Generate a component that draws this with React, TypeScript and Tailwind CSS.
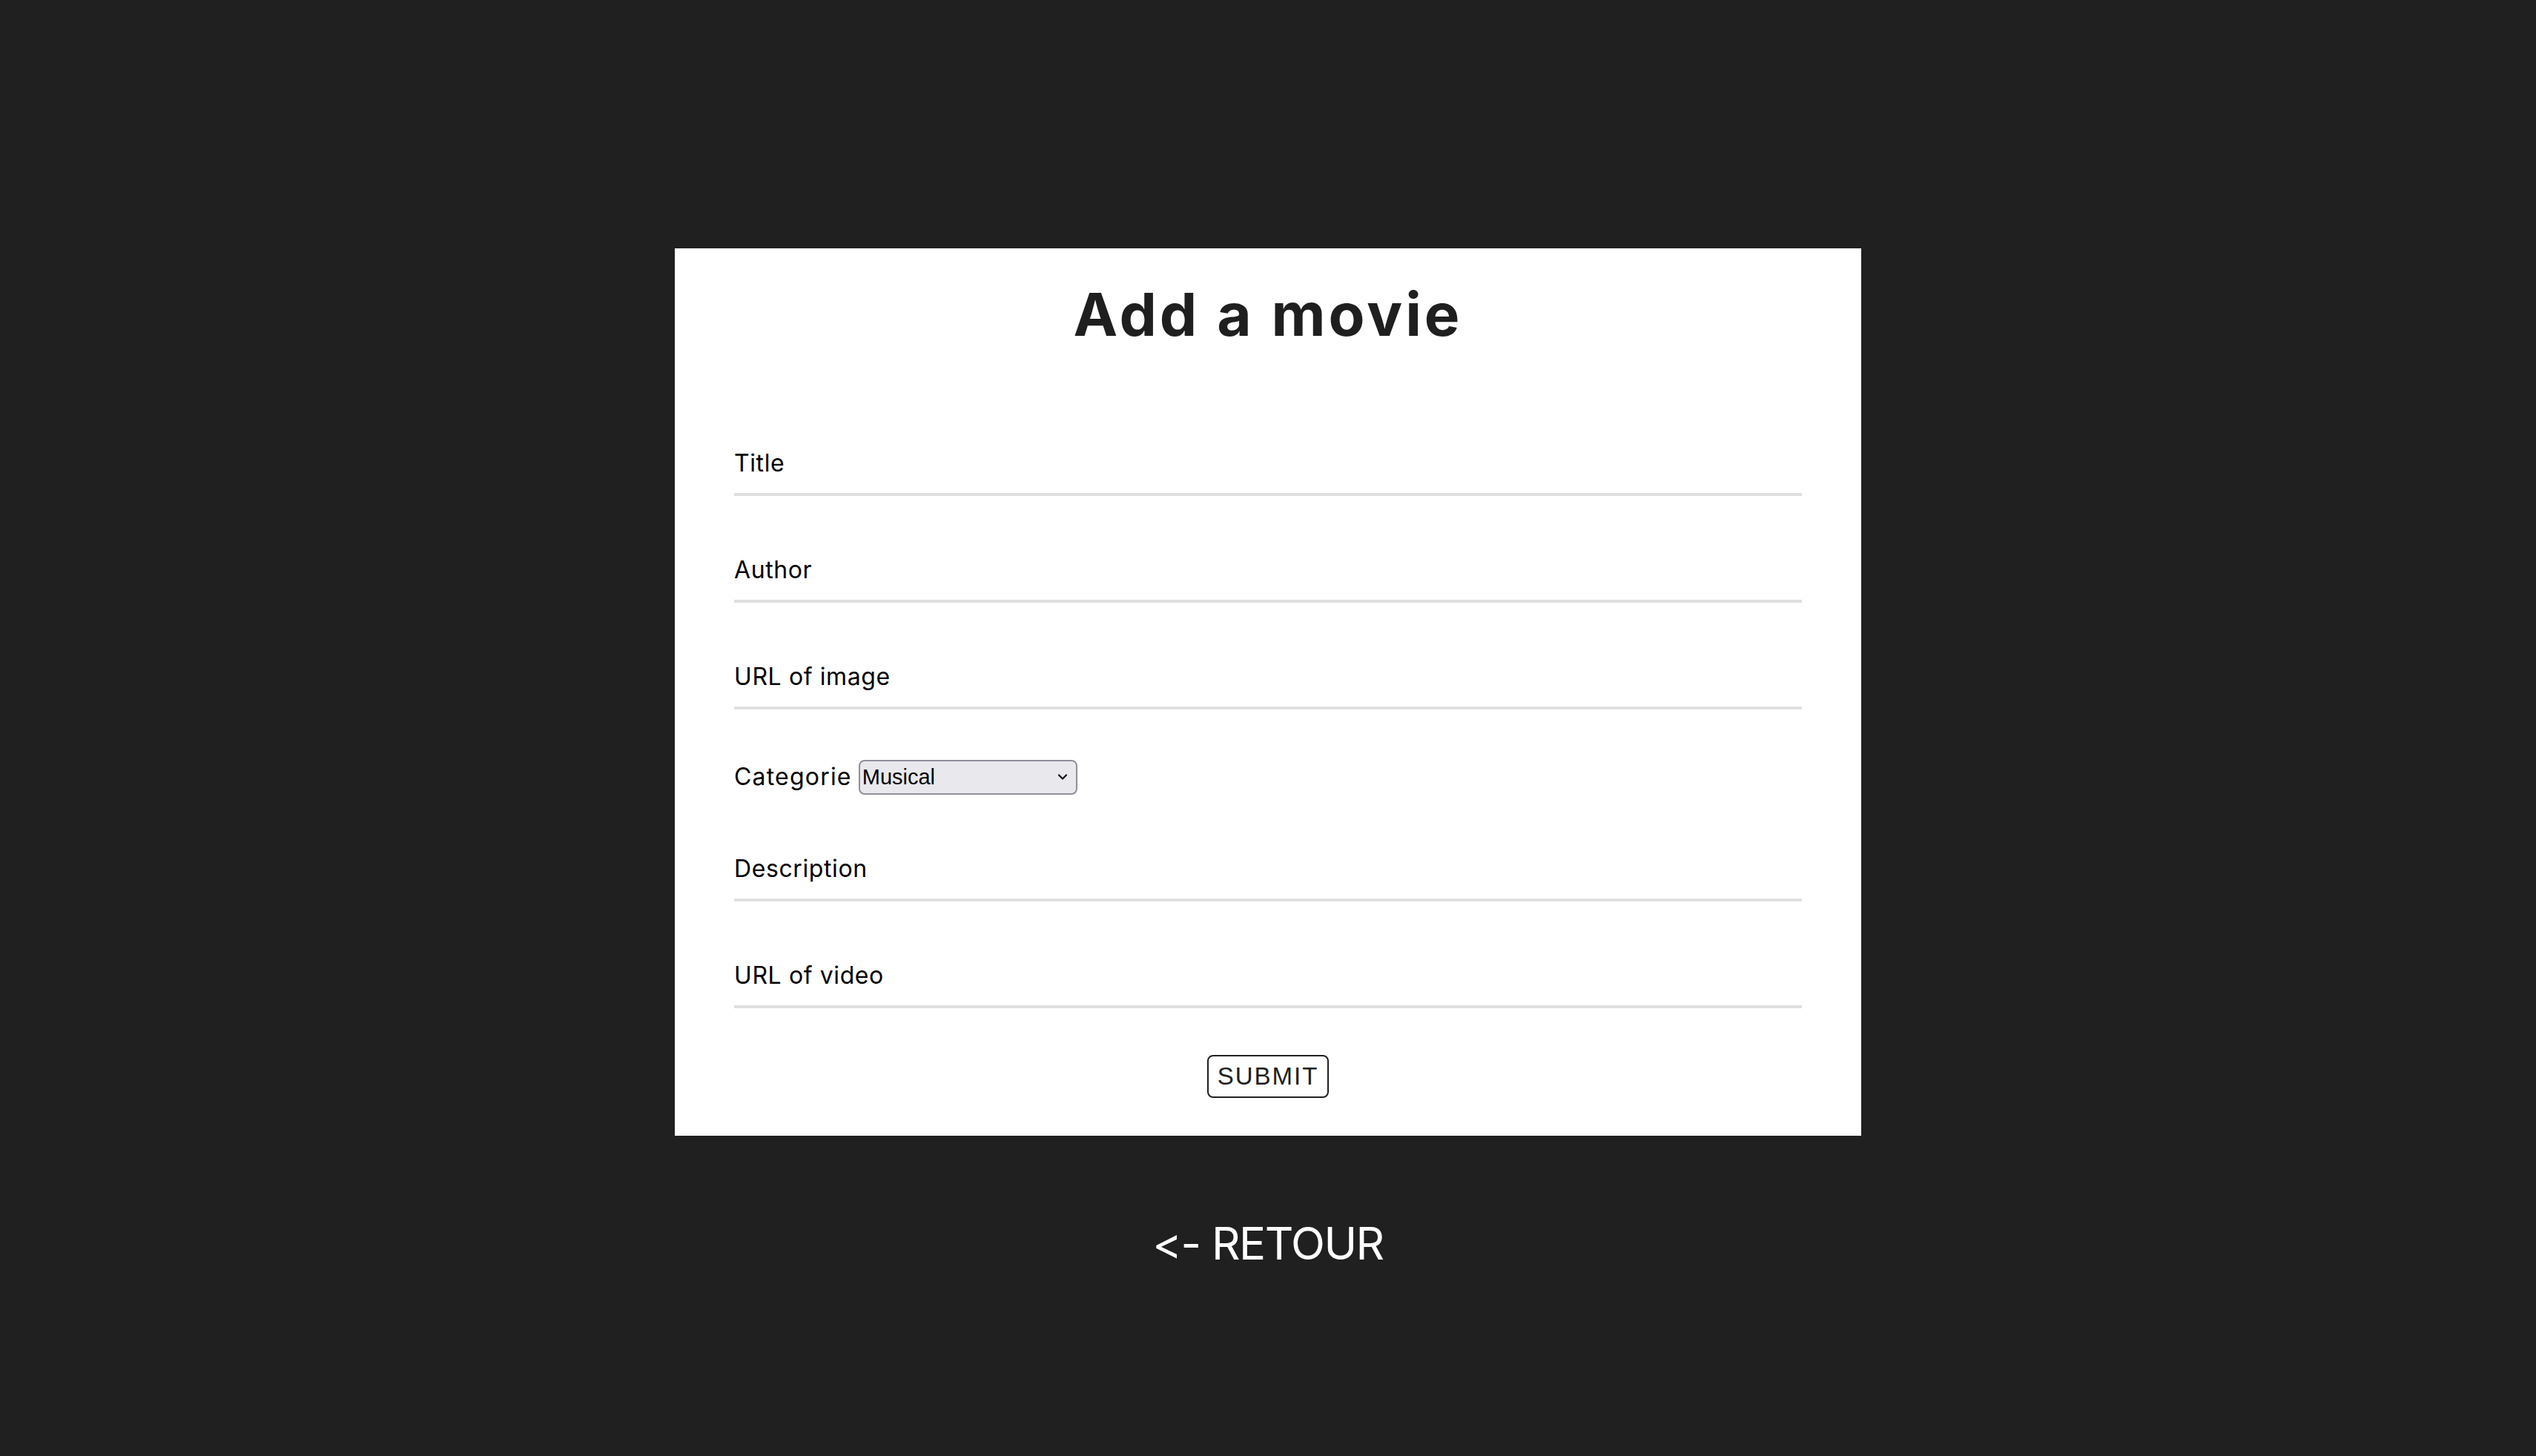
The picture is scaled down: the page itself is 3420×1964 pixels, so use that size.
import React from "react";

const Field = ({ label }: { label: string }) => (
  <div className="flex flex-col">
    <label className="text-[32px] leading-[48px] tracking-[0.6px] text-black">{label}</label>
    <div className="mt-4 h-[4px] w-full bg-[#dfdfdf]" />
  </div>
);

export default function App() {
  return (
    <div
      className="min-h-[1964px] w-full bg-[#202020] flex flex-col items-center pt-[335px]"
      style={{ fontFamily: "Inter, 'Noto Sans', sans-serif" }}
    >
      <div className="w-[1600px] bg-white px-[80px] pt-[41px] pb-[51px] flex flex-col">
        <h1 className="text-center text-[80px] leading-[96px] font-bold text-[#1f1f1f] tracking-[4px]">
          Add a movie
        </h1>
        <div className="mt-[129px] flex flex-col gap-[76px]">
          <Field label="Title" />
          <Field label="Author" />
          <Field label="URL of image" />
        </div>
        <div className="mt-[67px] flex items-center">
          <span className="text-[32px] leading-[48px] tracking-[1.2px] text-black">Categorie</span>
          <div className="relative ml-[9px]">
            <select
              defaultValue="Musical"
              className="appearance-none w-[295px] h-[47px] bg-[#e9e9ed] border-2 border-[#8f8f9d] rounded-[8px] pl-[3px] text-[29px] text-black outline-none"
              style={{ fontFamily: "'Liberation Sans', Arial, sans-serif" }}
            >
              <option>Musical</option>
              <option>Action</option>
              <option>Comedy</option>
              <option>Drame</option>
            </select>
            <svg
              className="pointer-events-none absolute right-[13px] top-[18px]"
              width="14"
              height="10"
              viewBox="0 0 14 10"
              fill="none"
            >
              <path d="M2 2.5 L7 7.5 L12 2.5" stroke="#111" strokeWidth="2.2" strokeLinecap="round" strokeLinejoin="round" />
            </svg>
          </div>
        </div>
        <div className="mt-[76px] flex flex-col gap-[76px]">
          <Field label="Description" />
          <Field label="URL of video" />
        </div>
        <div className="mt-[63px] flex justify-center">
          <button
            className="h-[58px] w-[164px] border-2 border-[#202020] rounded-[8px] bg-white text-[33px] tracking-[2px] text-[#202020] flex items-center justify-center"
            style={{ fontFamily: "'Liberation Sans', Arial, sans-serif" }}
          >
            SUBMIT
          </button>
        </div>
      </div>
      <a className="mt-[109px] text-white text-[60px] leading-[72px] tracking-[-1.5px] cursor-pointer [font-feature-settings:'calt'_0,'liga'_0] [font-variant-ligatures:none]">
        &lt;- RETOUR
      </a>
    </div>
  );
}
